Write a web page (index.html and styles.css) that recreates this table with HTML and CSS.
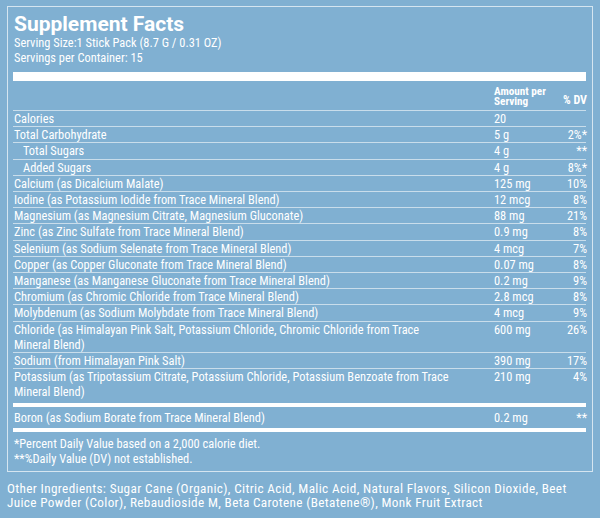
FILE: index.html
```
<!DOCTYPE html>
<html>
<head>
<meta charset="utf-8">
<link rel="stylesheet" href="styles.css">
</head>
<body>
<div class="page">
  <div class="panel">
    <h1 class="title">Supplement Facts</h1>
    <div class="serving">Serving Size:1 Stick Pack (8.7 G / 0.31 OZ)</div>
    <div class="serving">Servings per Container: 15</div>
    <div class="bar bar-thick"></div>
    <div class="row head">
      <div class="name"></div>
      <div class="amt head-amt">Amount per<br>Serving</div>
      <div class="dv head-dv">% DV</div>
    </div>
    <div class="row"><div class="name">Calories</div><div class="amt">20</div><div class="dv"></div></div>
    <div class="row"><div class="name">Total Carbohydrate</div><div class="amt">5 g</div><div class="dv">2%*</div></div>
    <div class="row"><div class="name sub">Total Sugars</div><div class="amt">4 g</div><div class="dv">**</div></div>
    <div class="row"><div class="name sub">Added Sugars</div><div class="amt">4 g</div><div class="dv">8%*</div></div>
    <div class="row"><div class="name">Calcium (as Dicalcium Malate)</div><div class="amt">125 mg</div><div class="dv">10%</div></div>
    <div class="row"><div class="name">Iodine (as Potassium Iodide from Trace Mineral Blend)</div><div class="amt">12 mcg</div><div class="dv">8%</div></div>
    <div class="row"><div class="name">Magnesium (as Magnesium Citrate, Magnesium Gluconate)</div><div class="amt">88 mg</div><div class="dv">21%</div></div>
    <div class="row"><div class="name">Zinc (as Zinc Sulfate from Trace Mineral Blend)</div><div class="amt">0.9 mg</div><div class="dv">8%</div></div>
    <div class="row"><div class="name">Selenium (as Sodium Selenate from Trace Mineral Blend)</div><div class="amt">4 mcg</div><div class="dv">7%</div></div>
    <div class="row"><div class="name">Copper (as Copper Gluconate from Trace Mineral Blend)</div><div class="amt">0.07 mg</div><div class="dv">8%</div></div>
    <div class="row"><div class="name">Manganese (as Manganese Gluconate from Trace Mineral Blend)</div><div class="amt">0.2 mg</div><div class="dv">9%</div></div>
    <div class="row"><div class="name">Chromium (as Chromic Chloride from Trace Mineral Blend)</div><div class="amt">2.8 mcg</div><div class="dv">8%</div></div>
    <div class="row"><div class="name">Molybdenum (as Sodium Molybdate from Trace Mineral Blend)</div><div class="amt">4 mcg</div><div class="dv">9%</div></div>
    <div class="row"><div class="name">Chloride (as Himalayan Pink Salt, Potassium Chloride, Chromic Chloride from Trace<br>Mineral Blend)</div><div class="amt">600 mg</div><div class="dv">26%</div></div>
    <div class="row"><div class="name">Sodium (from Himalayan Pink Salt)</div><div class="amt">390 mg</div><div class="dv">17%</div></div>
    <div class="row last"><div class="name">Potassium (as Tripotassium Citrate, Potassium Chloride, Potassium Benzoate from Trace Mineral Blend)</div><div class="amt">210 mg</div><div class="dv">4%</div></div>
    <div class="bar bar-mid"></div>
    <div class="row boron"><div class="name">Boron (as Sodium Borate from Trace Mineral Blend)</div><div class="amt">0.2 mg</div><div class="dv">**</div></div>
    <div class="bar bar-mid"></div>
    <div class="note">*Percent Daily Value based on a 2,000 calorie diet.</div>
    <div class="note">**%Daily Value (DV) not established.</div>
  </div>
  <p class="other">Other Ingredients: Sugar Cane (Organic), Citric Acid, Malic Acid, Natural Flavors, Silicon Dioxide, Beet Juice Powder (Color), Rebaudioside M, Beta Carotene (Betatene®), Monk Fruit Extract</p>
</div>
</body>
</html>
```
FILE: styles.css
```
html, body {
  margin: 0;
  padding: 0;
}
body {
  background: #80b0d2;
  color: #ffffff;
  font-family: "Roboto", "Liberation Sans", sans-serif;
  font-stretch: 75%;
  width: 600px;
  height: 518px;
  overflow: hidden;
}
.page {
  padding: 6px 7px 0 7px;
}
.panel {
  border: 1px solid #d5e5f0;
  padding: 6px 6px 5px 5px;
}
.title {
  margin: 0;
  font-size: 21px;
  line-height: 22px;
  font-weight: 700;
  font-stretch: 100%;
  letter-spacing: 0;
  padding-left: 1px;
}
.serving {
  font-size: 12.4px;
  line-height: 15px;
  padding-left: 1px;
}
.bar {
  background: #ffffff;
}
.bar-thick {
  height: 9px;
  margin-top: 7px;
}
.bar-mid {
  height: 4px;
}
.row {
  display: grid;
  grid-template-columns: 481px 62px 31px;
  font-size: 12.4px;
  line-height: 15.2px;
  border-bottom: 1px solid #c9ddeb;
}
.row.last {
  border-bottom: none;
  padding-bottom: 3px;
}
.row.boron {
  border-bottom: none;
  padding: 3px 0 3px 0;
}
.name {
  padding-left: 1px;
  padding-right: 20px;
}
.name.sub {
  padding-left: 10px;
}
.dv {
  text-align: right;
}
.head {
  height: 29px;
  align-items: end;
}
.head-amt {
  font-weight: 700;
  font-size: 11.2px;
  line-height: 9.5px;
  padding-bottom: 4px;
}
.head-dv {
  font-weight: 700;
  font-size: 12px;
  line-height: 12px;
  padding-bottom: 4px;
}
.note {
  font-size: 12.4px;
  line-height: 15px;
  padding-left: 1px;
}
.bar-mid + .note {
  margin-top: 4px;
}
.other {
  margin: 10px 0 0 0;
  font-size: 13.2px;
  letter-spacing: 0.36px;
  line-height: 14px;
}
```
